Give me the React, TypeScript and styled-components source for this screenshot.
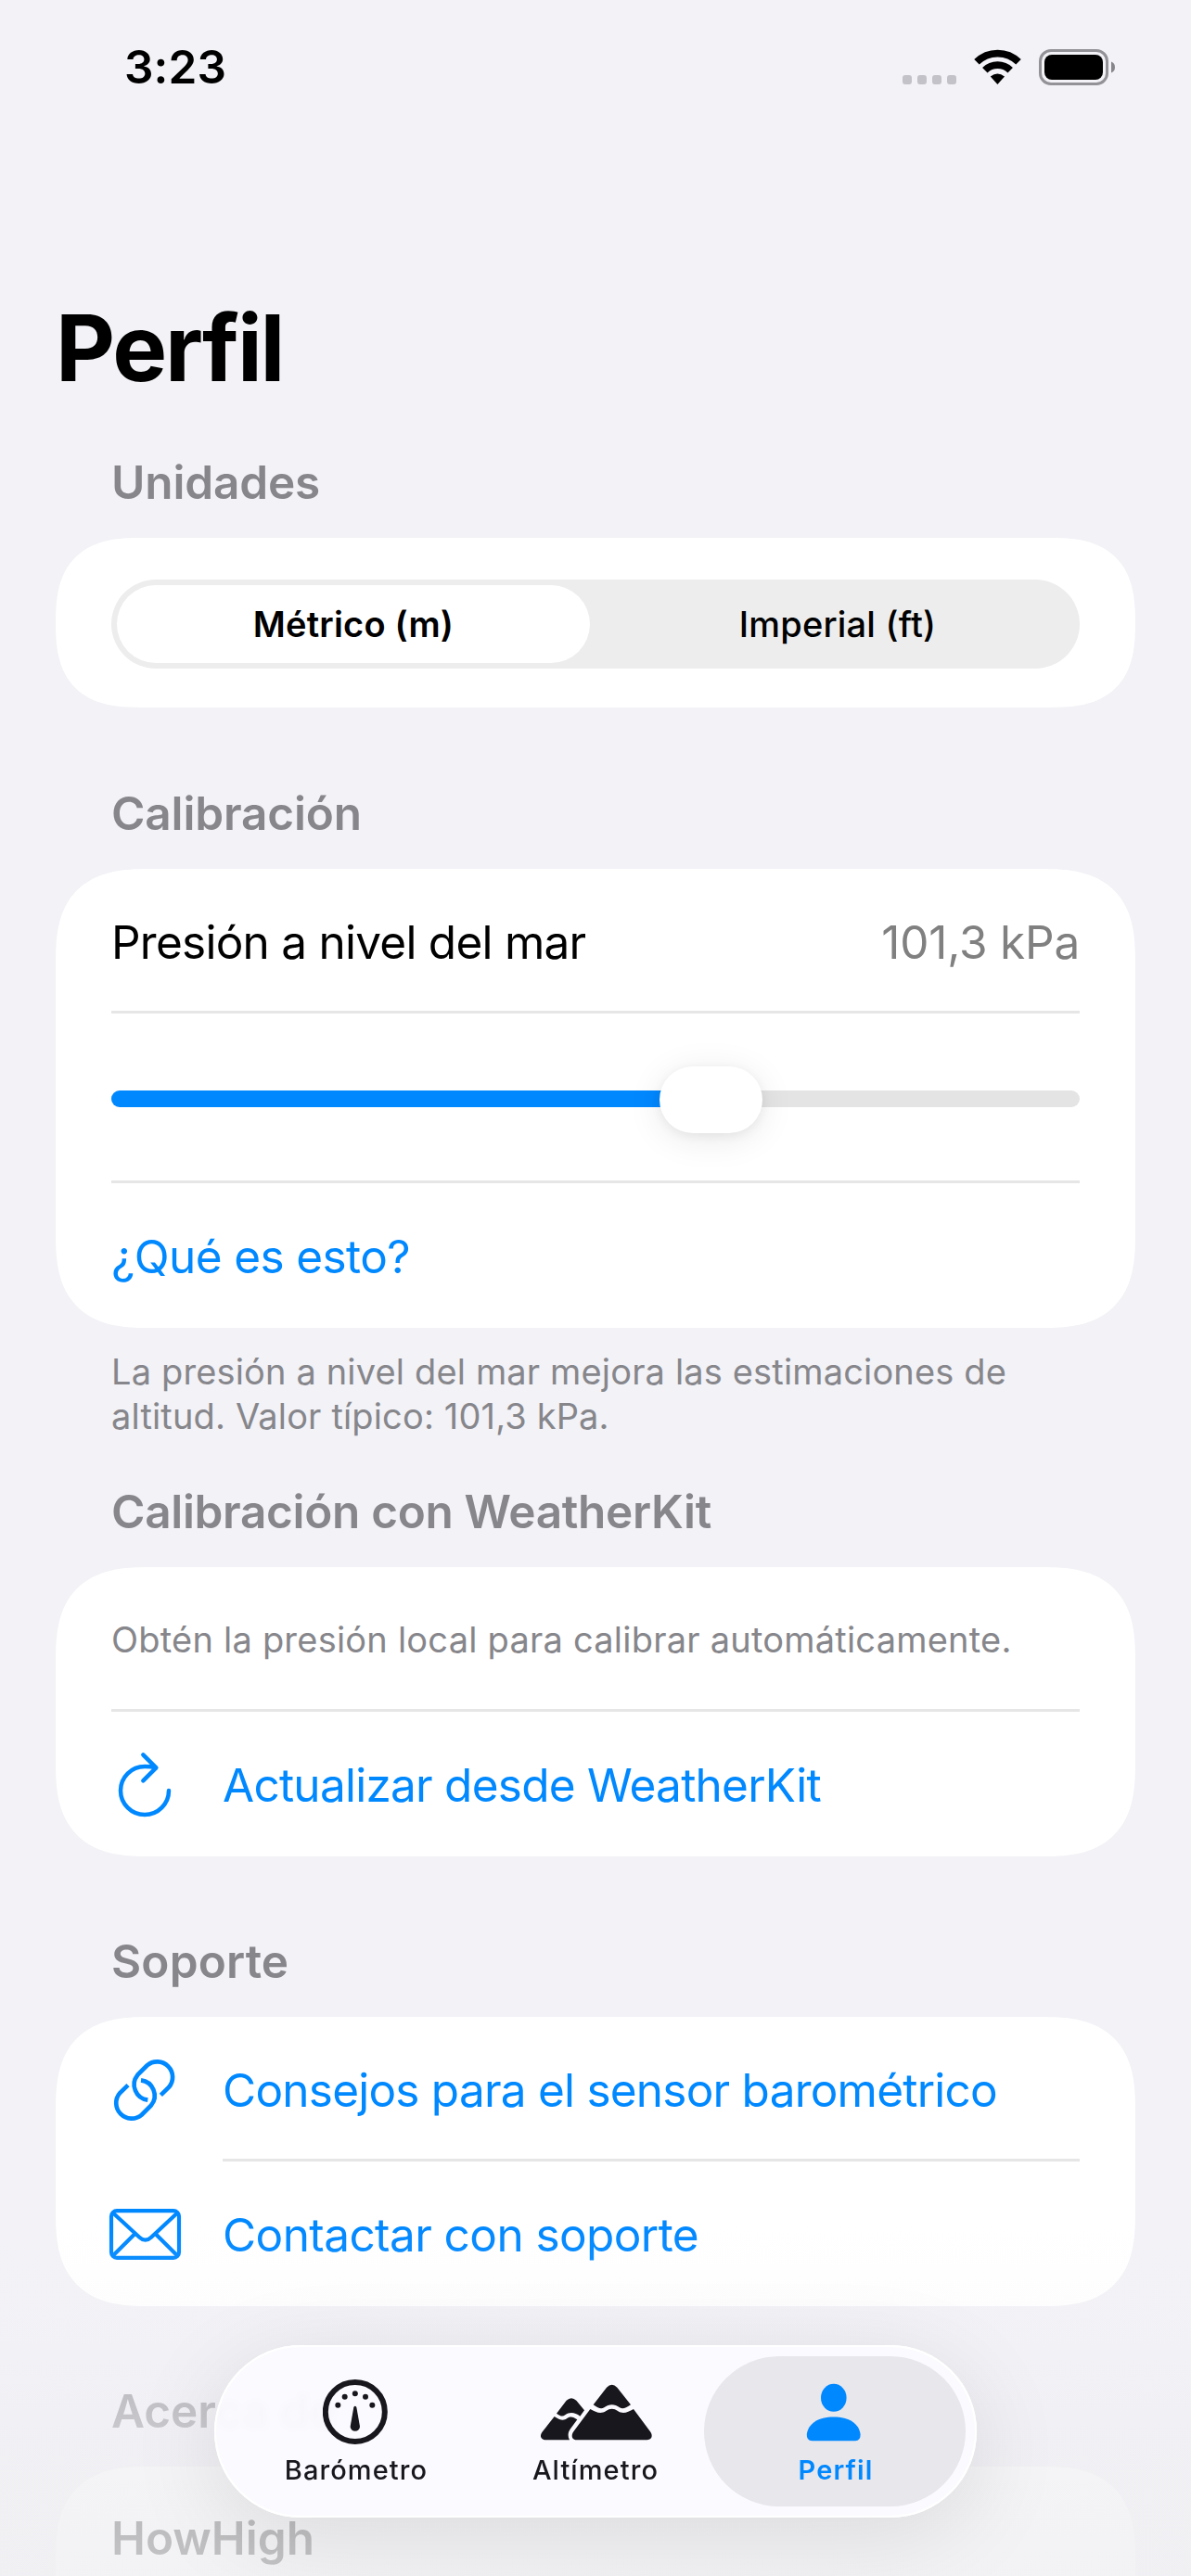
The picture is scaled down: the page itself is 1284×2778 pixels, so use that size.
import React from "react";
import styled, { createGlobalStyle, css } from "styled-components";

const BLUE = "#0088ff";
const INK = "#18171d";
const SECONDARY = "#86868b";

const GlobalStyle = createGlobalStyle`
  * { box-sizing: border-box; }
  body {
    margin: 0;
    background: #f2f2f7;
    font-family: Inter, "Liberation Sans", sans-serif;
    color: #000;
  }
`;

const Screen = styled.main`
  position: relative;
  width: 1284px;
  height: 2778px;
  overflow: hidden;
  background: #f2f2f7;
`;

const StatusBar = styled.header`
  display: flex;
  align-items: center;
  justify-content: space-between;
  height: 147px;
  padding: 0 82px 0 134px;
`;

const Clock = styled.time`
  padding-bottom: 3px;
  font-size: 49.5px;
  line-height: 60px;
  font-weight: 600;
  letter-spacing: 0.1px;
`;

const StatusIcons = styled.div`
  display: flex;
  align-items: center;
  gap: 19px;
  padding-bottom: 1px;
  svg { display: block; height: 40px; }
`;

const Title = styled.h1`
  margin: 168px 0 55px 60px;
  font-size: 99px;
  line-height: 120px;
  font-weight: 700;
  letter-spacing: -2.2px;
`;

const Section = styled.section<{ $gap?: number }>`
  margin: 0 60px ${(p) => p.$gap ?? 84}px;
`;

const SectionTitle = styled.h2<{ $spacing?: number }>`
  margin: 0 0 30px 60px;
  font-size: 49.5px;
  line-height: 60px;
  font-weight: 600;
  letter-spacing: ${(p) => p.$spacing ?? 0}px;
  color: ${SECONDARY};
`;

const Card = styled.div`
  background: #fff;
  border-radius: 80px;
  padding: 0 60px;
  @supports (corner-shape: superellipse(1.4)) {
    border-radius: 100px;
    corner-shape: superellipse(1.4);
  }
`;

const SegmentCard = styled(Card)`
  height: 183px;
  padding: 45px 60px 42px;
`;

const Segmented = styled.div`
  display: grid;
  grid-template-columns: 1fr 1fr;
  height: 96px;
  padding: 6px;
  border-radius: 48px;
  background: #ededee;
`;

const Segment = styled.button<{ $active?: boolean }>`
  border: 0;
  padding: 0 0 1px;
  border-radius: 42px;
  background: ${(p) => (p.$active ? "#fff" : "transparent")};
  font: ${(p) => (p.$active ? 600 : 500)} 38px/48px Inter, sans-serif;
  letter-spacing: 0.2px;
  color: #000;
  ${(p) =>
    p.$active
      ? css`margin-right: 6px;`
      : css`margin-left: 6px;`}
`;

const Row = styled.div<{ $divided?: boolean; $height?: number }>`
  display: flex;
  align-items: center;
  justify-content: space-between;
  height: ${(p) => p.$height ?? 156}px;
  padding-top: ${(p) => (p.$divided ? 4 : 1)}px;
  border-bottom: ${(p) => (p.$divided ? "3px solid #e6e6e6" : "0")};
`;

const Body = styled.span<{ $tone?: string; $spacing?: number; $weight?: number }>`
  font-size: 49.5px;
  line-height: 60px;
  font-weight: ${(p) => p.$weight ?? 400};
  letter-spacing: ${(p) => p.$spacing ?? -0.75}px;
  white-space: nowrap;
  color: ${(p) => p.$tone ?? "#000"};
`;

const Caption = styled.span`
  padding-bottom: 2px;
  font-size: 38px;
  line-height: 48px;
  letter-spacing: 0.22px;
  white-space: nowrap;
  color: ${SECONDARY};
`;

const Footnote = styled.p`
  margin: 23px 50px 0 60px;
  font-size: 38px;
  line-height: 48px;
  letter-spacing: 0.15px;
  color: ${SECONDARY};
`;

const ActionRow = styled.a`
  display: grid;
  grid-template-columns: 72px 1fr;
  column-gap: 48px;
  color: ${BLUE};
`;

const ActionIcon = styled.span<{ $divided?: boolean }>`
  display: flex;
  align-items: center;
  justify-content: center;
  padding-top: ${(p) => (p.$divided ? 1 : 2)}px;
  svg { flex: none; width: 78px; height: 78px; overflow: visible; }
`;

const Slider = styled.div`
  position: relative;
  flex: 1;
  height: 18px;
  border-radius: 9px;
  background: #e4e4e4;
`;

const SliderFill = styled.div`
  height: 100%;
  border-radius: 9px 0 0 9px;
  background: ${BLUE};
`;

const SliderThumb = styled.div`
  position: absolute;
  top: -26px;
  width: 111px;
  height: 72px;
  margin-left: -55px;
  border-radius: 36px;
  background: #fff;
  box-shadow: 0 3px 12px rgba(0, 0, 0, 0.06), 0 6px 38px rgba(0, 0, 0, 0.09);
`;

const BottomFade = styled.div`
  position: absolute;
  left: 0;
  right: 0;
  bottom: 0;
  height: 378px;
  pointer-events: none;
  background: linear-gradient(
    to bottom,
    rgba(241, 241, 245, 0) 0%,
    rgba(241, 241, 245, 0.12) 22%,
    rgba(240, 240, 244, 0.54) 48%,
    rgba(240, 240, 243, 0.76) 74%,
    rgba(240, 240, 243, 0.82) 100%
  );
`;

const TabBar = styled.nav`
  position: absolute;
  left: 231px;
  bottom: 63px;
  display: flex;
  width: 822px;
  height: 186px;
  padding: 12px;
  border-radius: 93px;
  background: rgba(251, 251, 255, 0.93);
  backdrop-filter: blur(3px);
  box-shadow: inset 0 0 0 2px #fff, 0 20px 100px rgba(0, 0, 0, 0.1);
`;

const Tab = styled.a<{ $active?: boolean }>`
  display: flex;
  flex-direction: column;
  align-items: center;
  gap: 9px;
  width: 282px;
  padding-top: 24px;
  border-radius: 81px;
  color: ${(p) => (p.$active ? BLUE : INK)};
  background: ${(p) => (p.$active ? "#e8e7ec" : "transparent")};
  & + & { margin-left: -24px; }
  svg { display: block; height: 72px; }
`;

const TabLabel = styled.span<{ $active?: boolean }>`
  padding-left: ${(p) => (p.$active ? 2 : 0)}px;
  font-size: 29px;
  line-height: 36px;
  font-weight: ${(p) => (p.$active ? 600 : 500)};
  letter-spacing: ${(p) => (p.$active ? 1.1 : 1.1)}px;
`;

const CellularDots = () => (
  <svg width="58" height="40" viewBox="0 0 58 40" fill="#c3c2c8">
    {[0, 16, 32, 48].map((x) => (
      <rect key={x} x={x} y="28" width="10" height="10" rx="3" />
    ))}
  </svg>
);

const WifiIcon = () => (
  <svg width="51" height="40" viewBox="0 0 51 40" fill="none" stroke="#000">
    <path d="M3 13.8A32 32 0 0 1 48 13.8" strokeWidth="7.8" />
    <path d="M11.8 22.8A19.6 19.6 0 0 1 39.2 22.8" strokeWidth="7.8" />
    <path d="M17.8 29.6Q25.4 23.2 33 29.6L25.4 38Z" fill="#000" stroke="none" />
  </svg>
);

const BatteryIcon = () => (
  <svg width="82" height="40" viewBox="0 0 82 40">
    <rect x="1.5" y="1.5" width="72" height="36" rx="11.5" fill="none" stroke="#939297" strokeWidth="3" />
    <rect x="6" y="6" width="63" height="27" rx="8" />
    <path d="M78 13.5Q82 15 82 19.5T78 25.5Z" fill="#87868b" />
  </svg>
);

const RefreshIcon = () => (
  <svg viewBox="0 0 234 234" fill="none" stroke={BLUE} strokeWidth="13.5" strokeLinecap="round" strokeLinejoin="round">
    <path d="M195 135A78 78 0 1 1 117 57Q137 57 153 61" />
    <path d="M112 19L154 61L112 103" />
  </svg>
);

const LinkIcon = () => (
  <svg viewBox="51 73 234 234" fill="none" stroke={BLUE} strokeWidth="14">
    <path d="M220 206L246 181A50 50 0 0 0 176 110L145 141A50 50 0 0 0 178 222" />
    <path d="M114 174L88 199A50 50 0 0 0 158 270L189 239A50 50 0 0 0 156 158" />
  </svg>
);

const MailIcon = () => (
  <svg viewBox="51 543 234 234" fill="none" stroke={BLUE} strokeWidth="12.5">
    <rect x="60" y="582.5" width="219" height="152" rx="18" />
    <path d="M64 588L151 668Q170 686 189 668L275 588" />
    <path d="M137 656L64 729M202 656L275 729" />
  </svg>
);

const GaugeIcon = () => (
  <svg width="72" viewBox="144 75 216 216" fill="currentColor">
    <circle cx="248.5" cy="183" r="96" fill="none" stroke="currentColor" strokeWidth="18" />
    {[[193, 161], [215, 134], [248.5, 124], [282, 134], [304, 161]].map(([x, y]) => (
      <circle key={x} cx={x} cy={y} r="9" />
    ))}
    <path d="M244 168Q248.5 161 253 168L264 230A15.5 15.5 0 0 1 233 230Z" />
  </svg>
);

const MountainsIcon = () => (
  <svg width="126" viewBox="837 75 378 216" fill="currentColor">
    <path d="M1019 160L1062 104Q1079 86 1096 104L1140 160C1122 172 1114 175 1104 169C1088 157 1070 157 1054 169C1044 175 1036 172 1019 160Z" />
    <path d="M1009 174C1028 185 1044 191 1060 180Q1079 167 1098 180C1114 191 1130 185 1149 174L1203 247C1214 262 1206 274 1192 274H966C950 274 945 260 956 245Z" />
    <path d="M900 188L932 146Q948 131 964 146L990 178L976 197C960 184 942 182 928 193C918 200 912 196 900 188Z" />
    <path d="M893 198C910 209 922 213 934 204C946 196 954 199 967 208L945 238C936 250 936 263 942 274H866C850 274 844 261 853 249Z" />
  </svg>
);

const PersonIcon = () => (
  <svg width="72" viewBox="0 0 72 72" fill="currentColor">
    <ellipse cx="34.8" cy="20.8" rx="13.8" ry="15" />
    <path d="M5.8 60C7.5 48.5 18 41.4 34.7 41.4C51.4 41.4 62 48.5 63.6 60Q64 67.2 58 67.2H11.4Q5.4 67.2 5.8 60Z" />
  </svg>
);

function Action({ icon, label, divided, spacing }: { icon: React.ReactNode; label: string; divided?: boolean; spacing?: number }) {
  return (
    <ActionRow>
      <ActionIcon $divided={divided}>{icon}</ActionIcon>
      <Row $divided={divided}>
        <Body $tone={BLUE} $spacing={spacing}>{label}</Body>
      </Row>
    </ActionRow>
  );
}

const MIN_KPA = 95;
const MAX_KPA = 105.18;

export default function App() {
  const pressure = 101.3;
  const position = `${((pressure - MIN_KPA) / (MAX_KPA - MIN_KPA)) * 100}%`;

  return (
    <Screen>
      <GlobalStyle />
      <StatusBar>
        <Clock>3:23</Clock>
        <StatusIcons>
          <CellularDots />
          <WifiIcon />
          <BatteryIcon />
        </StatusIcons>
      </StatusBar>

      <Title>Perfil</Title>

      <Section>
        <SectionTitle $spacing={-0.15}>Unidades</SectionTitle>
        <SegmentCard>
          <Segmented>
            <Segment $active>Métrico (m)</Segment>
            <Segment>Imperial (ft)</Segment>
          </Segmented>
        </SegmentCard>
      </Section>

      <Section $gap={49}>
        <SectionTitle $spacing={-0.15}>Calibración</SectionTitle>
        <Card>
          <Row $divided>
            <Body>Presión a nivel del mar</Body>
            <Body $tone="#808080" $spacing={-0.2}>101,3 kPa</Body>
          </Row>
          <Row $divided $height={183}>
            <Slider>
              <SliderFill style={{ width: position }} />
              <SliderThumb style={{ left: position }} />
            </Slider>
          </Row>
          <Row>
            <Body $tone={BLUE} $spacing={-0.6}>¿Qué es esto?</Body>
          </Row>
        </Card>
        <Footnote>
          La presión a nivel del mar mejora las estimaciones de altitud. Valor típico: 101,3 kPa.
        </Footnote>
      </Section>

      <Section $gap={83}>
        <SectionTitle $spacing={-0.32}>Calibración con WeatherKit</SectionTitle>
        <Card>
          <Row $divided>
            <Caption>Obtén la presión local para calibrar automáticamente.</Caption>
          </Row>
          <Action icon={<RefreshIcon />} label="Actualizar desde WeatherKit" spacing={-0.75} />
        </Card>
      </Section>

      <Section $gap={83}>
        <SectionTitle $spacing={0.15}>Soporte</SectionTitle>
        <Card>
          <Action icon={<LinkIcon />} label="Consejos para el sensor barométrico" divided spacing={-0.77} />
          <Action icon={<MailIcon />} label="Contactar con soporte" spacing={-0.58} />
        </Card>
      </Section>

      <Section $gap={0}>
        <SectionTitle>Acerca de</SectionTitle>
        <Card>
          <Row $height={153}>
            <Body $weight={600} $spacing={0}>HowHigh</Body>
          </Row>
          <Row />
        </Card>
      </Section>

      <BottomFade />

      <TabBar>
        <Tab>
          <GaugeIcon />
          <TabLabel>Barómetro</TabLabel>
        </Tab>
        <Tab>
          <MountainsIcon />
          <TabLabel>Altímetro</TabLabel>
        </Tab>
        <Tab $active>
          <PersonIcon />
          <TabLabel $active>Perfil</TabLabel>
        </Tab>
      </TabBar>
    </Screen>
  );
}
